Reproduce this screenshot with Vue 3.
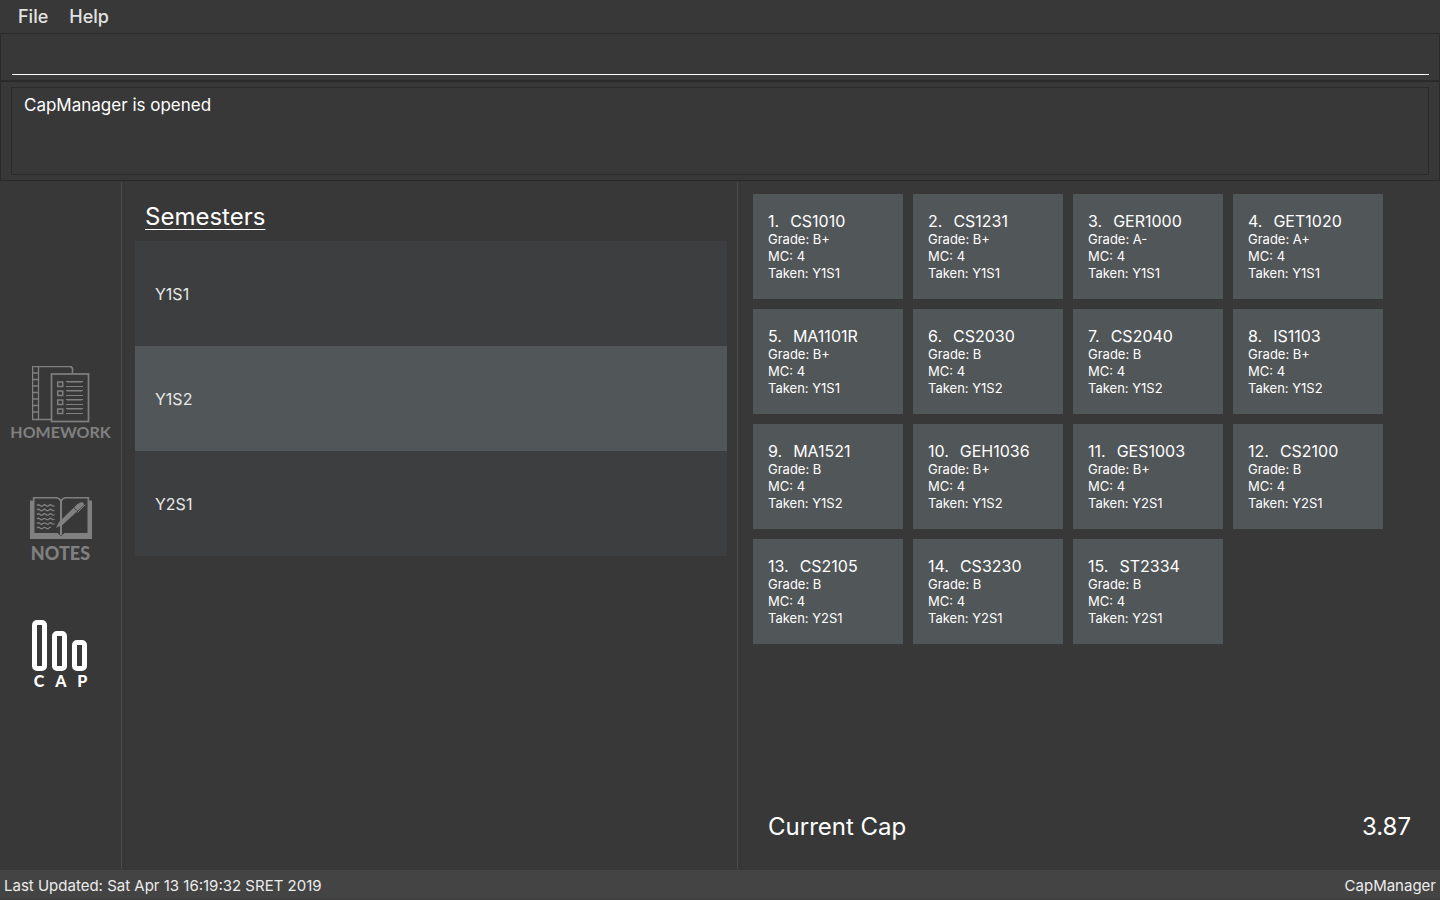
<script setup>
import { ref } from 'vue'

const command = ref('')
const selected = ref('Y1S2')
const semesters = ['Y1S1', 'Y1S2', 'Y2S1']
const modules = [
  ['CS1010', 'B+', 'Y1S1'],
  ['CS1231', 'B+', 'Y1S1'],
  ['GER1000', 'A-', 'Y1S1'],
  ['GET1020', 'A+', 'Y1S1'],
  ['MA1101R', 'B+', 'Y1S1'],
  ['CS2030', 'B', 'Y1S2'],
  ['CS2040', 'B', 'Y1S2'],
  ['IS1103', 'B+', 'Y1S2'],
  ['MA1521', 'B', 'Y1S2'],
  ['GEH1036', 'B+', 'Y1S2'],
  ['GES1003', 'B+', 'Y2S1'],
  ['CS2100', 'B', 'Y2S1'],
  ['CS2105', 'B', 'Y2S1'],
  ['CS3230', 'B', 'Y2S1'],
  ['ST2334', 'B', 'Y2S1'],
].map(([code, grade, taken]) => ({ code, grade, taken, mc: 4 }))
const rows = [0, 9, 18, 27]
const scribbles = [0, 1, 2, 3, 4, 5]
</script>

<template>
  <div class="window">
    <nav class="menu">
      <button type="button">File</button>
      <button type="button">Help</button>
    </nav>
    <div class="command">
      <input v-model="command" type="text" aria-label="Command" />
    </div>
    <div class="result">
      <output class="message">CapManager is opened</output>
    </div>

    <main class="main">
      <aside class="sidebar">
        <button type="button" class="tab homework">
          <svg width="58" height="58" viewBox="0 0 58 58" fill="none" stroke="#808080" aria-hidden="true">
            <path d="M19 53.5H.5V.5H39L40.5 2V7" stroke-width="1.5" />
            <path d="M6.500 .5V53.500M.5 7H6.500M.5 13.500H6.500M.5 20H6.500M.5 26.500H6.500M.5 33H6.500M.5 39.500H6.500M.5 46H6.500" stroke-width="1.3" />
            <path d="M37.500 0L41 3.500" />
            <rect x="19.500" y="8" width="37" height="47.500" stroke-width="1.7" />
            <g v-for="y in rows" :key="y">
              <rect x="25.700" :y="16 + y" width="5" height="4.500" stroke-width="1.5" />
              <path :d="`M34 ${15.500 + y}H51M34 ${20.500 + y}H51`" />
              <path :d="`M35 ${16.500 + y}H50`" stroke="#5c5c5c" />
            </g>
          </svg>
          <span>HOMEWORK</span>
        </button>

        <button type="button" class="tab notes">
          <svg width="62" height="42" viewBox="0 0 62 42" fill="none" stroke="#808080" aria-hidden="true">
            <path d="M0 3.500H4V36H27.500L31 39L34.500 36H58V3.500H62V42H0Z" fill="#808080" stroke="none" />
            <path d="M3.700 36V.8H26.500Q29 .8 31 4Q33 .8 35.500 .8H58.300V36" stroke-width="1.6" />
            <path d="M31 3V38" stroke-width="2" />
            <path
              v-for="n in scribbles"
              :key="n"
              stroke-width="1.2"
              :d="`M7 ${8.500 + n * 4.500}q1.500 -1.500 3 0t3 0t3 0t3 0${n < 5 ? 't3 0t2.500 0' : 't1.500 0'}`"
            />
            <path d="M26 31L29 25L47.500 7L51.500 5Q55 5.500 53.500 8.500L33 27.500Z" fill="#808080" stroke="none" />
            <path d="M55.500 7.500L47.500 15.500" />
            <path d="M43 10L48 14.500" stroke="#383838" stroke-width=".8" />
          </svg>
          <span>NOTES</span>
        </button>

        <button type="button" class="tab cap">
          <svg width="58" height="52" viewBox="0 0 58 52" fill="none" stroke="#fff" stroke-width="5" aria-hidden="true">
            <rect x="2.500" y="2.500" width="10" height="46" rx="2.500" />
            <rect x="22.500" y="13.500" width="10" height="35" rx="2.500" />
            <rect x="42.500" y="22.500" width="10" height="26" rx="2.500" />
          </svg>
          <span>C&nbsp;&nbsp; A&nbsp;&nbsp; P</span>
        </button>
      </aside>

      <section class="semesters">
        <h2>Semesters</h2>
        <ul>
          <li v-for="s in semesters" :key="s">
            <button type="button" :class="{ active: s === selected }" @click="selected = s">{{ s }}</button>
          </li>
        </ul>
      </section>

      <section class="modules">
        <div class="cards">
          <article v-for="(m, i) in modules" :key="m.code" class="card">
            <h3><span>{{ i + 1 }}.</span><span>{{ m.code }}</span></h3>
            <p>Grade: {{ m.grade }}</p>
            <p>MC: {{ m.mc }}</p>
            <p>Taken: {{ m.taken }}</p>
          </article>
        </div>
        <div class="total">
          <span>Current Cap</span>
          <span>3.87</span>
        </div>
      </section>
    </main>

    <footer class="status">
      <span>Last Updated: Sat Apr 13 16:19:32 SRET 2019</span>
      <span>CapManager</span>
    </footer>
  </div>
</template>

<style>
body {
  background: #383838;
}
</style>

<style scoped>
* {
  box-sizing: border-box;
  margin: 0;
  padding: 0;
}
.window {
  min-height: 100vh;
  display: flex;
  flex-direction: column;
  background: #383838;
  color: #fff;
  font-family: Inter, "Liberation Sans", sans-serif;
}
button {
  border: 0;
  background: none;
  color: inherit;
  font: inherit;
  cursor: pointer;
}
.menu {
  display: flex;
  gap: 21px;
  height: 33px;
  padding: 0 18px;
  font-size: 18px;
  font-weight: 500;
  color: #e2e2e2;
}
.command {
  height: 48px;
  padding: 4px 10px 5px 11px;
  border: 1px solid #2a2a2a;
}
.command input {
  display: block;
  width: 100%;
  height: 37px;
  border: 0;
  border-bottom: 1px solid #fff;
  outline: 0;
  background: transparent;
  color: #fff;
  font: 17px Inter, sans-serif;
}
.result {
  height: 100px;
  padding: 5px 10px;
  border: 1px solid #2a2a2a;
}
.message {
  display: block;
  height: 88px;
  padding: 6px 12px;
  border: 1px solid #2a2a2a;
  font-size: 17px;
  line-height: 22px;
}
.main {
  flex: 1;
  display: grid;
  grid-template-columns: 122px 616fr 702fr;
  padding: 1px 0;
}
.sidebar {
  display: flex;
  flex-direction: column;
  align-items: center;
  justify-content: center;
  gap: 57px;
  padding-top: 4px;
  border-right: 1px solid #4c4c4c;
}
.tab {
  display: flex;
  flex-direction: column;
  align-items: center;
  color: #808080;
  font-family: Lato, sans-serif;
  font-weight: 700;
  white-space: nowrap;
}
.homework {
  font-size: 16px;
  line-height: 16px;
}
.notes {
  gap: 4px;
  font-size: 18px;
  font-weight: 900;
  line-height: 20px;
}
.cap {
  color: #fff;
  font-size: 16px;
  font-weight: 900;
  line-height: 18px;
}
.semesters {
  padding: 17px 10px 0 13px;
  border-right: 1px solid #4c4c4c;
}
.semesters h2 {
  padding-left: 10px;
  margin-bottom: 7px;
  font-size: 24px;
  font-weight: 400;
  line-height: 35px;
  text-decoration: underline;
  text-decoration-thickness: 1px;
  text-underline-offset: 4px;
}
.semesters ul {
  list-style: none;
}
.semesters li button {
  display: block;
  width: 100%;
  height: 105px;
  padding: 0 20px;
  background: #3c3e3f;
  color: #e8e8e8;
  font-size: 16px;
  text-align: left;
}
.semesters li .active {
  background: #515658;
}
.modules {
  display: flex;
  flex-direction: column;
  justify-content: space-between;
  padding: 12px 29px 24px 15px;
}
.cards {
  display: flex;
  flex-wrap: wrap;
  gap: 10px;
}
.card {
  display: flex;
  flex-direction: column;
  justify-content: center;
  width: 150px;
  height: 105px;
  padding: 0 15px;
  background: #515658;
}
.card h3 {
  display: flex;
  gap: 11px;
  font-size: 16px;
  font-weight: 400;
  line-height: 20px;
}
.card p {
  font-size: 13px;
  line-height: 17px;
}
.total {
  display: flex;
  justify-content: space-between;
  padding-left: 15px;
  font-size: 24px;
  line-height: 36px;
}
.status {
  display: flex;
  align-items: center;
  justify-content: space-between;
  height: 30px;
  padding: 2px 4px 0;
  background: #444;
  border-bottom: 1px solid #3c3c3c;
  color: #ececec;
  font-size: 15px;
}
</style>
